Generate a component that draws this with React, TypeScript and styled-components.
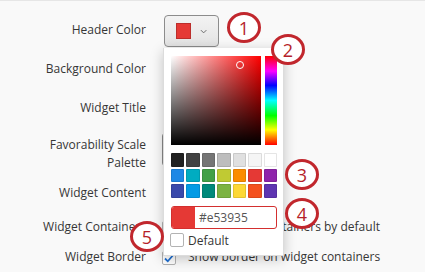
import styled, { createGlobalStyle } from "styled-components";

const GlobalStyle = createGlobalStyle`
  html, body {
    margin: 0;
    padding: 0;
  }
  body {
    background: #f9f9f9;
    font-family: "Open Sans", "Liberation Sans", sans-serif;
    overflow: hidden;
  }
`;

const Page = styled.div`
  position: relative;
  width: 425px;
  height: 272px;
  box-sizing: border-box;
  border-top: 1px solid #e6e6e6;
  padding-top: 14px;
  color: #363636;
  font-size: 12px;
`;

const Row = styled.div<{ $gap: number }>`
  display: grid;
  grid-template-columns: 146px 1fr;
  column-gap: 16px;
  align-items: start;
  margin-bottom: ${(p) => p.$gap}px;
`;

const Label = styled.div<{ $pad: number }>`
  text-align: right;
  line-height: 18px;
  padding-top: ${(p) => p.$pad}px;
`;

const ColorButton = styled.div`
  display: flex;
  align-items: center;
  gap: 9px;
  box-sizing: border-box;
  width: 55px;
  height: 32px;
  margin-left: 2px;
  padding: 0 11px;
  border: 1px solid #8c8c8c;
  border-radius: 4px;
  background: linear-gradient(#f3f3f3, #e3e3e3);
`;

const Swatch = styled.div<{ $color: string }>`
  width: 16px;
  height: 16px;
  box-sizing: border-box;
  background: ${(p) => p.$color};
  border: 1px solid rgba(0, 0, 0, 0.18);
`;

const Field = styled.div<{ $width: number; $height: number; $left: number }>`
  box-sizing: border-box;
  width: ${(p) => p.$width}px;
  height: ${(p) => p.$height}px;
  margin-left: ${(p) => p.$left}px;
  background: #fff;
  border: 1px solid #8a8a8a;
  border-radius: 3px;
`;

const CheckRow = styled.div`
  display: flex;
  align-items: center;
  gap: 12px;
  height: 18px;
  line-height: 18px;
  white-space: nowrap;
`;

const CheckBox = styled.div<{ $top?: number }>`
  flex: none;
  display: flex;
  align-items: center;
  justify-content: center;
  box-sizing: border-box;
  width: 14px;
  height: 14px;
  margin-top: ${(p) => p.$top ?? 0}px;
  background: #fff;
  border: 1px solid #b3b3b3;
  border-radius: 2px;
`;

const Popup = styled.div`
  position: absolute;
  left: 163px;
  top: 47px;
  width: 121px;
  height: 208px;
  box-sizing: border-box;
  padding: 7px 6px 0 7px;
  background: #fff;
  border: 1px solid #dcdcdc;
  border-top: none;
  box-shadow: 0 3px 12px rgba(0, 0, 0, 0.22);
  z-index: 2;
`;

const PickerArea = styled.div`
  display: flex;
  gap: 4px;
  padding-top: 1px;
`;

const SatVal = styled.div`
  position: relative;
  width: 90px;
  height: 89px;
  background: linear-gradient(to top, #000, rgba(0, 0, 0, 0)),
    linear-gradient(to right, #fff, #f00);
`;

const Marker = styled.div`
  position: absolute;
  left: 65px;
  top: 5px;
  width: 8px;
  height: 8px;
  box-sizing: border-box;
  border: 1.5px solid #fff;
  border-radius: 50%;
`;

const Hue = styled.div`
  width: 12px;
  height: 89px;
  background: linear-gradient(
    to bottom,
    #f00 0%,
    #f0f 17%,
    #00f 33%,
    #0ff 50%,
    #0f0 67%,
    #ff0 83%,
    #f00 100%
  );
`;

const Palette = styled.div`
  display: grid;
  grid-template-columns: repeat(7, 1fr);
  column-gap: 2px;
  row-gap: 2px;
  margin-top: 8px;
`;

const Chip = styled.div<{ $color: string }>`
  height: 13.5px;
  box-sizing: border-box;
  background: ${(p) => p.$color};
  border: 1px solid rgba(0, 0, 0, 0.1);
  border-radius: 1px;
`;

const HexInput = styled.div`
  display: flex;
  align-items: center;
  box-sizing: border-box;
  height: 23px;
  margin-top: 8px;
  border: 1px solid #d32f2f;
  border-radius: 3px;
  overflow: hidden;
`;

const HexColor = styled.div`
  width: 23px;
  height: 100%;
  background: #e53935;
`;

const HexText = styled.span`
  padding-left: 4px;
  color: #555;
  font-size: 12px;
`;

const DefaultRow = styled.div`
  display: flex;
  align-items: center;
  gap: 4px;
  margin-top: 5px;
  margin-left: -1px;
  height: 13px;
  line-height: 13px;
`;

const Annotation = styled.div<{ $x: number; $y: number }>`
  position: absolute;
  left: ${(p) => p.$x}px;
  top: ${(p) => p.$y}px;
  width: 34px;
  height: 31px;
  box-sizing: border-box;
  display: flex;
  align-items: center;
  justify-content: center;
  border: 3px solid #c1272d;
  border-radius: 50%;
  background: #fff;
  color: #b51f2a;
  font-size: 18px;
  font-weight: 500;
  z-index: 3;
`;

const palette = [
  "#212121", "#424242", "#757575", "#bdbdbd", "#e0e0e0", "#f5f5f5", "#ffffff",
  "#1e88e5", "#00acc1", "#43a047", "#c0ca33", "#fb8c00", "#e53935", "#8e24aa",
  "#3949ab", "#039be5", "#00897b", "#7cb342", "#fdd835", "#f4511e", "#5e35b1",
];

const notes = [
  { n: 1, x: 227, y: 11 },
  { n: 2, x: 271, y: 33 },
  { n: 3, x: 285, y: 158 },
  { n: 4, x: 285, y: 197 },
  { n: 5, x: 130, y: 220 },
];

function Chevron() {
  return (
    <svg width="8" height="5" viewBox="0 0 8 5">
      <path d="M1 1l3 3 3-3" fill="none" stroke="#6b6b6b" strokeWidth="1.1" />
    </svg>
  );
}

function Check() {
  return (
    <svg width="12" height="12" viewBox="0 0 12 12">
      <path d="M2 6.5l2.8 2.8L10.2 3" fill="none" stroke="#1f6fd1" strokeWidth="1.8" />
    </svg>
  );
}

function App() {
  return (
    <>
      <GlobalStyle />
      <Page>
        <Row $gap={7}>
          <Label $pad={6}>Header Color</Label>
          <ColorButton>
            <Swatch $color="#e53935" />
            <Chevron />
          </ColorButton>
        </Row>
        <Row $gap={7}>
          <Label $pad={6}>Background Color</Label>
          <ColorButton>
            <Swatch $color="#ffffff" />
            <Chevron />
          </ColorButton>
        </Row>
        <Row $gap={8}>
          <Label $pad={6}>Widget Title</Label>
          <Field $width={110} $height={32} $left={2} />
        </Row>
        <Row $gap={8}>
          <Label $pad={3}>
            Favorability Scale
            <br />
            Palette
          </Label>
          <Field $width={110} $height={33} $left={0} />
        </Row>
        <Row $gap={6}>
          <Label $pad={4}>Widget Content</Label>
          <Field $width={110} $height={32} $left={2} />
        </Row>
        <Row $gap={12}>
          <Label $pad={0}>Widget Containers</Label>
          <CheckRow>
            <CheckBox $top={1} />
            Show widget containers by default
          </CheckRow>
        </Row>
        <Row $gap={0}>
          <Label $pad={0}>Widget Border</Label>
          <CheckRow>
            <CheckBox $top={2}>
              <Check />
            </CheckBox>
            Show border on widget containers
          </CheckRow>
        </Row>

        <Popup>
          <PickerArea>
            <SatVal>
              <Marker />
            </SatVal>
            <Hue />
          </PickerArea>
          <Palette>
            {palette.map((c, i) => (
              <Chip key={i} $color={c} />
            ))}
          </Palette>
          <HexInput>
            <HexColor />
            <HexText>#e53935</HexText>
          </HexInput>
          <DefaultRow>
            <CheckBox />
            Default
          </DefaultRow>
        </Popup>

        {notes.map((a) => (
          <Annotation key={a.n} $x={a.x} $y={a.y}>
            {a.n}
          </Annotation>
        ))}
      </Page>
    </>
  );
}

export default App;
